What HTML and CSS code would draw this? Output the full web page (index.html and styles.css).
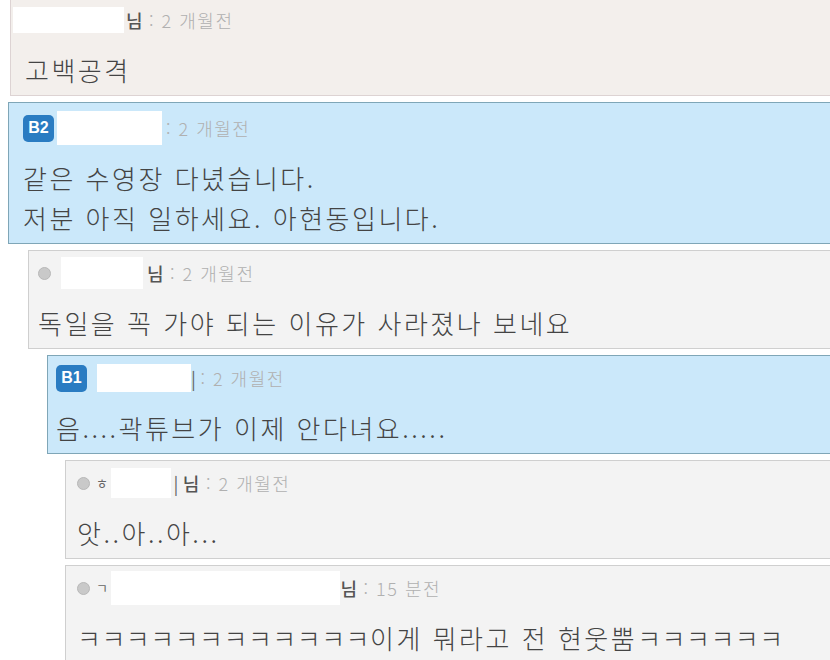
FILE: index.html
```html
<!DOCTYPE html>
<html lang="ko">
<head>
<meta charset="utf-8">
<title>댓글</title>
<link rel="stylesheet" href="styles.css">
</head>
<body>
<div class="thread">
  <div class="comment d0 tone-beige">
    <div class="meta">
      <span class="redact r1"></span>
      <span class="nim">님</span><span class="time">: 2 개월전</span>
    </div>
    <div class="text">고백공격</div>
  </div>

  <div class="comment d0b tone-blue">
    <div class="meta">
      <span class="badge">B2</span>
      <span class="redact r2"></span>
      <span class="time">: 2 개월전</span>
    </div>
    <div class="text">같은 수영장 다녔습니다.<br>저분 아직 일하세요. 아현동입니다.</div>
  </div>

  <div class="comment d1 tone-gray">
    <div class="meta">
      <span class="dot"></span>
      <span class="redact r3"></span>
      <span class="nim">님</span><span class="time">: 2 개월전</span>
    </div>
    <div class="text">독일을 꼭 가야 되는 이유가 사라졌나 보네요</div>
  </div>

  <div class="comment d2 tone-blue">
    <div class="meta">
      <span class="badge">B1</span>
      <span class="redact r4"></span>
      <span class="bar">|</span><span class="time">: 2 개월전</span>
    </div>
    <div class="text">음....곽튜브가 이제 안다녀요.....</div>
  </div>

  <div class="comment d3 tone-gray">
    <div class="meta">
      <span class="dot"></span>
      <span class="frag">ㅎ</span>
      <span class="redact r5"></span>
      <span class="bar">|</span><span class="nim">님</span><span class="time">: 2 개월전</span>
    </div>
    <div class="text">앗..아..아...</div>
  </div>

  <div class="comment d3 tone-gray">
    <div class="meta">
      <span class="dot"></span>
      <span class="frag">ㄱ</span>
      <span class="redact r6"></span>
      <span class="nim">님</span><span class="time">: 15 분전</span>
    </div>
    <div class="text"><span class="jamo">ㅋㅋㅋㅋㅋㅋㅋㅋㅋㅋㅋㅋ</span>이게 뭐라고 전 현웃뿜<span class="jamo">ㅋㅋㅋㅋㅋㅋ</span></div>
  </div>
</div>
</body>
</html>
```

FILE: styles.css
```css
html, body {
  margin: 0;
  padding: 0;
  background: #ffffff;
  overflow: hidden;
}

body {
  font-family: "Noto Sans CJK KR", "Noto Sans", sans-serif;
  color: #444444;
}

.thread {
  display: flex;
  flex-direction: column;
  gap: 6px;
  margin-top: -3px;
  margin-right: -40px;
}

.comment {
  border: 1px solid #d0d0d0;
  padding: 7px 14px 5px 14px;
}

.d0 { margin-left: 10px; }
.d0b { margin-left: 8px; padding-top: 10px; }
.d1 { margin-left: 28px; padding-left: 9px; }
.d2 { margin-left: 47px; padding-left: 8px; }
.d3 { margin-left: 65px; padding-left: 11px; }

.tone-beige {
  background: #f3efec;
  border-color: #ddd3d3;
}

.tone-blue {
  background: #cbe8fa;
  border-color: #7fa6b7;
}

.tone-gray {
  background: #f3f3f3;
  border-color: #cfcfcf;
}

.meta {
  height: 30px;
  display: flex;
  align-items: center;
  font-size: 18px;
  letter-spacing: 1.5px;
  line-height: 30px;
  white-space: nowrap;
}

.nim {
  color: #555555;
  font-weight: 500;
  margin-right: 5px;
}

.time {
  color: #b0b0b0;
  font-weight: 300;
}

.bar {
  color: #666;
  margin-right: 3px;
}

.frag {
  color: #666;
  font-size: 13px;
  margin-left: 6px;
}

.redact {
  display: inline-block;
  background: #ffffff;
  height: 30px;
}

.r1 { width: 111px; height: 26px; margin-left: -12px; margin-right: 2px; }
.r2 { width: 105px; height: 34px; margin-left: 3px; margin-right: 4px; }
.r3 { width: 82px; height: 32px; margin-left: 10px; margin-right: 4px; }
.r4 { width: 94px; height: 28px; margin-left: 10px; margin-right: 0; }
.r5 { width: 60px; height: 30px; margin-left: 2px; margin-right: 2px; }
.r6 { width: 229px; height: 34px; margin-left: 2px; margin-right: 0; }

.badge {
  display: inline-flex;
  align-items: center;
  justify-content: center;
  width: 31px;
  height: 27px;
  border-radius: 5px;
  background: #2a7cc2;
  color: #ffffff;
  font-family: "Liberation Sans", Arial, sans-serif;
  font-weight: bold;
  font-size: 16px;
  letter-spacing: 0;
  line-height: 1;
}

.dot {
  display: inline-block;
  width: 11px;
  height: 11px;
  border-radius: 50%;
  background: #c9c9c9;
  border: 1px solid #b8b8b8;
}

.text {
  margin-top: 15px;
  font-size: 26px;
  font-weight: 300;
  letter-spacing: 2.5px;
  line-height: 40px;
  color: #444444;
  white-space: nowrap;
}

.jamo {
  letter-spacing: 0.5px;
}
```
